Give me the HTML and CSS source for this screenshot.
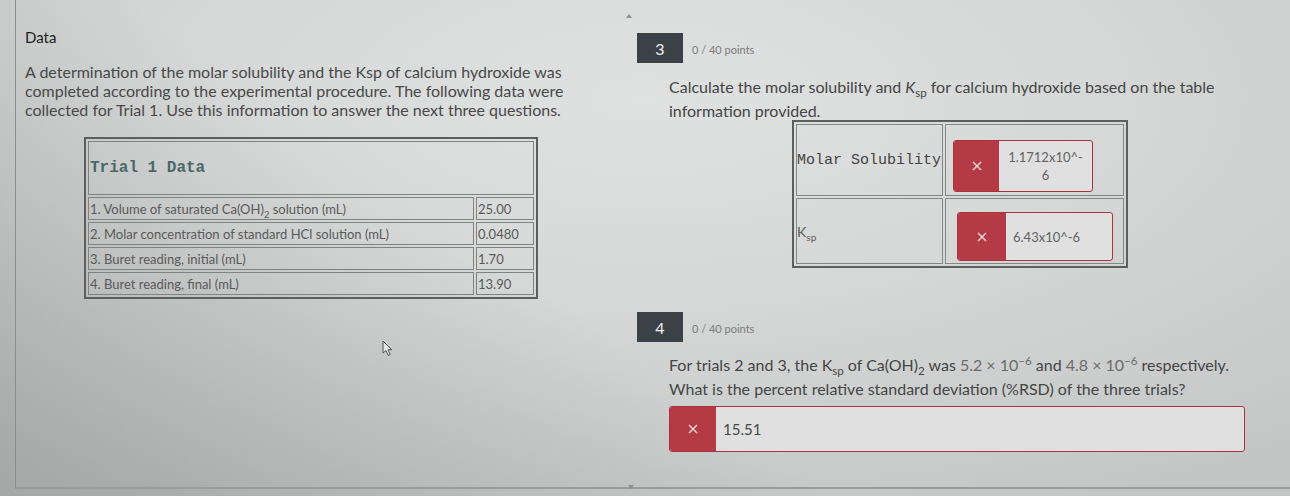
FILE: index.html
```html
<!DOCTYPE html>
<html lang="en">
<head>
<meta charset="utf-8">
<title>Calcium hydroxide Ksp</title>
<link rel="stylesheet" href="styles.css">
</head>
<body>
<div class="screen">
  <div class="frame">
    <section class="left-pane">
      <h2 class="data-title">Data</h2>
      <p class="intro">A determination of the molar solubility and the Ksp of calcium hydroxide was completed according to the experimental procedure. The following data were collected for Trial 1. Use this information to answer the next three questions.</p>
      <table class="trial">
        <tr><th colspan="2" class="trial-head">Trial 1 Data</th></tr>
        <tr><td class="lbl">1. Volume of saturated Ca(OH)<sub>2</sub> solution (mL)</td><td class="val">25.00</td></tr>
        <tr><td class="lbl">2. Molar concentration of standard HCl solution (mL)</td><td class="val">0.0480</td></tr>
        <tr><td class="lbl">3. Buret reading, initial (mL)</td><td class="val">1.70</td></tr>
        <tr><td class="lbl">4. Buret reading, final (mL)</td><td class="val">13.90</td></tr>
      </table>
    </section>
    <div class="gutter">
      <span class="arrow arrow-up"></span>
      <span class="arrow arrow-down"></span>
    </div>
    <section class="right-pane">
      <div class="question q3">
        <div class="q-head"><span class="q-num">3</span><span class="q-points">0 / 40 points</span></div>
        <p class="q-text">Calculate the molar solubility and <i>K</i><sub>sp</sub> for calcium hydroxide based on the table information provided.</p>
        <table class="answers">
          <tr class="row-ms">
            <td class="a-label mono">Molar Solubility</td>
            <td class="a-cell">
              <div class="ans ans-ms">
                <span class="ans-x"><svg viewBox="0 0 10 10" width="10" height="10"><path d="M1 1L9 9M9 1L1 9" stroke="#f3dfe1" stroke-width="1.3"/></svg></span>
                <span class="ans-val centered">1.1712x10^-<br>6</span>
              </div>
            </td>
          </tr>
          <tr class="row-ksp">
            <td class="a-label ksp">K<sub>sp</sub></td>
            <td class="a-cell">
              <div class="ans ans-ksp">
                <span class="ans-x"><svg viewBox="0 0 10 10" width="10" height="10"><path d="M1 1L9 9M9 1L1 9" stroke="#f3dfe1" stroke-width="1.3"/></svg></span>
                <span class="ans-val">6.43x10^-6</span>
              </div>
            </td>
          </tr>
        </table>
      </div>
      <div class="question q4">
        <div class="q-head"><span class="q-num">4</span><span class="q-points">0 / 40 points</span></div>
        <p class="q-text">For trials 2 and 3, the K<sub>sp</sub> of Ca(OH)<sub>2</sub> was <span class="math">5.2 × 10<sup>−6</sup></span> and <span class="math">4.8 × 10<sup>−6</sup></span> respectively. What is the percent relative standard deviation (%RSD) of the three trials?</p>
        <div class="ans ans-wide">
          <span class="ans-x"><svg viewBox="0 0 10 10" width="10" height="10"><path d="M1 1L9 9M9 1L1 9" stroke="#f3dfe1" stroke-width="1.3"/></svg></span>
          <span class="ans-val big">15.51</span>
        </div>
      </div>
    </section>
  </div>
  <svg class="cursor" viewBox="0 0 11 17" width="11" height="17"><path d="M1 1L1 13L4 10.5L6.3 15.5L8.2 14.6L6 9.8L9.8 9.8Z" fill="#e4e6e5" stroke="#555" stroke-width="1"/></svg>
</div>
</body>
</html>
```
FILE: styles.css
```css
html, body {
  margin: 0;
  padding: 0;
}
body {
  width: 1290px;
  height: 496px;
  overflow: hidden;
  font-family: Lato, "Open Sans", "Liberation Sans", sans-serif;
  color: #3e4040;
}
.screen {
  position: relative;
  width: 1290px;
  height: 496px;
  background:
    linear-gradient(35deg, rgba(120,122,121,0.4) 0%, rgba(120,122,121,0) 42%),
    radial-gradient(ellipse 80% 90% at 50% 20%, #e0e2e1 0%, #d6d8d7 45%, #c4c6c5 100%);
}
.frame {
  display: flex;
  height: 487px;
  margin-left: 15px;
  border-left: 1px solid #8b8d8c;
  border-bottom: 2px solid #9a9c9b;
}
.left-pane {
  width: 604px;
  padding: 28px 0 0 9px;
  box-sizing: border-box;
}
.data-title {
  margin: 0;
  font-size: 15px;
  font-weight: 400;
  line-height: 18px;
  color: #1f2121;
}
.intro {
  margin: 16px 0 0 0;
  font-size: 16px;
  line-height: 19px;
  color: #474949;
  width: 560px;
}
.trial {
  margin: 18px 0 0 59px;
  width: 454px;
  border: 2px solid #5d5f5e;
  border-spacing: 2px;
  font-size: 13px;
  color: #585a5a;
}
.trial th, .trial td {
  border: 1px solid #818382;
  padding: 0 1px;
  text-align: left;
}
.trial-head {
  height: 52px;
  font-family: "Liberation Mono", "DejaVu Sans Mono", monospace;
  font-weight: bold;
  font-size: 16px;
  color: #4a6767;
}
.trial .lbl {
  height: 21px;
}
.trial .val {
  width: 54px;
}
sub, sup {
  font-size: 0.72em;
  line-height: 0;
}
.gutter {
  width: 17px;
  display: flex;
  flex-direction: column;
  justify-content: space-between;
  align-items: center;
  padding: 14px 0 0 0;
  box-sizing: border-box;
}
.arrow {
  width: 0;
  height: 0;
  border-left: 3px solid transparent;
  border-right: 3px solid transparent;
}
.arrow-up {
  border-bottom: 4px solid #8d8f8e;
}
.arrow-down {
  border-top: 4px solid #8d8f8e;
  margin: 0 0 -2px 4px;
}
.right-pane {
  flex: 1;
  padding: 33px 0 0 0;
}
.question {
  width: 608px;
}
.q-head {
  display: flex;
  align-items: center;
}
.q-num {
  width: 46px;
  height: 30px;
  background: #3a4247;
  color: #eef0f0;
  font-size: 16px;
  display: flex;
  align-items: center;
  justify-content: center;
}
.q-points {
  margin-left: 9px;
  padding-top: 3px;
  font-size: 11px;
  color: #7a7c7c;
}
.q-text {
  margin: 12px 0 0 32px;
  font-size: 16px;
  line-height: 24px;
  color: #444646;
}
.answers {
  margin: -3px 0 0 155px;
  width: 336px;
  border: 2px solid #5d5f5e;
  border-spacing: 2px;
}
.answers td {
  border: 1px solid #858786;
  padding: 0;
}
.a-label {
  width: 145px;
  padding-left: 1px;
  color: #444;
}
.mono {
  font-family: "Liberation Mono", "DejaVu Sans Mono", monospace;
  font-size: 15px;
}
.ksp {
  font-size: 14px;
  color: #5a5c5c;
  vertical-align: middle;
}
.row-ms td {
  height: 70px;
}
.row-ksp td {
  height: 64px;
}
.a-cell {
  vertical-align: bottom;
}
.ans {
  display: flex;
  box-sizing: border-box;
  border: 1px solid #a9343e;
  border-radius: 3px;
  background: #dfe0df;
  overflow: hidden;
}
.ans-x {
  width: 45px;
  background: #b43b45;
  display: flex;
  align-items: center;
  justify-content: center;
  flex-shrink: 0;
}
.ans-val {
  display: flex;
  align-items: center;
  padding-left: 7px;
  font-size: 13px;
  line-height: 18px;
  color: #626464;
}
.ans-val.centered {
  flex: 1;
  justify-content: center;
  text-align: center;
  padding-left: 0;
}
.ans-ms {
  width: 140px;
  height: 52px;
  margin: 0 0 3px 7px;
}
.ans-ksp {
  width: 156px;
  height: 49px;
  margin: 0 0 2px 11px;
}
.ans-ksp .ans-x {
  width: 48px;
}
.q4 {
  margin-top: 44px;
}
.q4 .q-text {
  margin-top: 11px;
}
.math {
  color: #6a6c6c;
}
.ans-wide {
  margin: 5px 0 0 32px;
  width: 576px;
  height: 46px;
}
.ans-wide .ans-x {
  width: 46px;
}
.ans-val.big {
  font-size: 15px;
  color: #464848;
}
.cursor {
  position: absolute;
  left: 382px;
  top: 340px;
}
```
